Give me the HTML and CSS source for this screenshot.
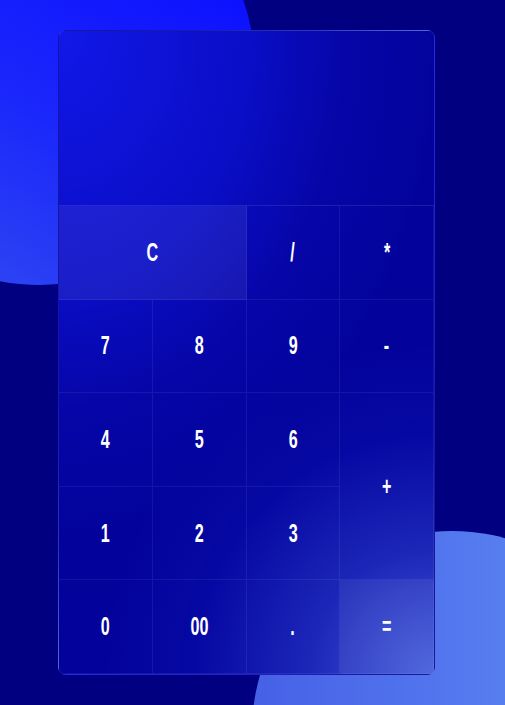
FILE: index.html
```html
<!DOCTYPE html>
<html>
<head>
<meta charset="utf-8">
<link rel="stylesheet" href="styles.css">
</head>
<body>
<div class="scene">
  <div class="blob blob-top"></div>
  <div class="blob blob-bottom"></div>
  <div class="calc">
    <div class="display"></div>
    <div class="keys">
      <button class="key wide light"><span>C</span></button>
      <button class="key"><span>/</span></button>
      <button class="key"><span>*</span></button>
      <button class="key"><span>7</span></button>
      <button class="key"><span>8</span></button>
      <button class="key"><span>9</span></button>
      <button class="key"><span>-</span></button>
      <button class="key"><span>4</span></button>
      <button class="key"><span>5</span></button>
      <button class="key"><span>6</span></button>
      <button class="key tall"><span>+</span></button>
      <button class="key"><span>1</span></button>
      <button class="key"><span>2</span></button>
      <button class="key"><span>3</span></button>
      <button class="key"><span>0</span></button>
      <button class="key"><span>00</span></button>
      <button class="key"><span>.</span></button>
      <button class="key light"><span>=</span></button>
    </div>
  </div>
</div>
</body>
</html>
```

FILE: styles.css
```css
* { box-sizing: border-box; }
html, body {
  margin: 0;
  padding: 0;
  width: 505px;
  height: 705px;
  overflow: hidden;
  background: #000080;
}
.scene {
  position: relative;
  width: 505px;
  height: 705px;
  overflow: hidden;
  padding: 30px 0 0 58px;
}
.blob {
  position: absolute;
  border-radius: 50%;
}
.blob-top {
  width: 430px;
  height: 430px;
  left: -175px;
  top: -145px;
  background: linear-gradient(30deg, #2f48f2 10%, #1a26fb 45%, #0c10ff 80%);
}
.blob-bottom {
  width: 400px;
  height: 400px;
  left: 252px;
  top: 531px;
  background: linear-gradient(90deg, #4660e6 0%, #5377ee 50%, #6390f2 100%);
}
.calc {
  position: relative;
  width: 377px;
  height: 645px;
  border-radius: 8px;
  border: 1px solid rgba(255,255,255,0.08);
  background:
    radial-gradient(circle 340px at 100% 100%, rgba(80,110,230,0.85) 0, rgba(50,70,210,0.5) 130px, rgba(20,30,190,0.2) 240px, rgba(20,30,190,0) 330px),
    radial-gradient(380px 500px at 0 0, #1218e8 0%, #0a0ec6 50%, #0606a8 75%, #03039c 100%),
    #03039a;
  overflow: hidden;
  display: flex;
  flex-direction: column;
}
.display {
  height: 175px;
  border-bottom: 1px solid rgba(255,255,255,0.1);
}
.keys {
  flex: 1;
  display: grid;
  grid-template-columns: repeat(4, 1fr);
  grid-template-rows: repeat(5, 1fr);
}
.key {
  border: none;
  border-right: 1px solid rgba(255,255,255,0.07);
  border-bottom: 1px solid rgba(255,255,255,0.07);
  background: transparent;
  color: #fff;
  font-family: "Liberation Sans", Arial, sans-serif;
  font-weight: 700;
  font-size: 26px;
  padding: 0;
  display: flex;
  align-items: center;
  justify-content: center;
}
.key span {
  display: inline-block;
  transform: scaleX(0.62);
}
.wide { grid-column: span 2; }
.tall { grid-row: span 2; }
.light { background: rgba(255,255,255,0.07); }
```
